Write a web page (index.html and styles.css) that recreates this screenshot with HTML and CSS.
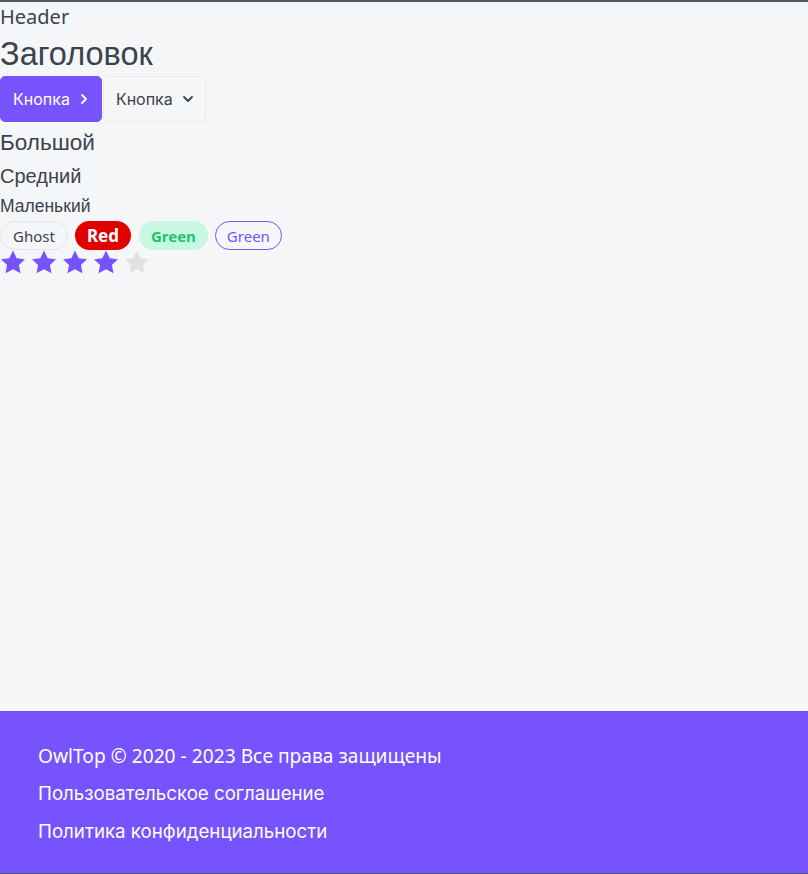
FILE: index.html
```html
<!DOCTYPE html>
<html lang="ru">
<head>
<meta charset="utf-8">
<title>OwlTop</title>
<link rel="stylesheet" href="styles.css">
</head>
<body>
<div class="page">
  <header class="header">Header</header>
  <main class="main">
    <h1 class="title">Заголовок</h1>
    <div class="buttons">
      <button class="btn btn-primary">Кнопка
        <svg class="arrow" width="10" height="12" viewBox="0 0 10 12"><path d="M3 2 L7 6 L3 10" fill="none" stroke="currentColor" stroke-width="1.8" stroke-linecap="round" stroke-linejoin="round"/></svg>
      </button>
      <button class="btn btn-ghost">Кнопка
        <svg class="arrow" width="12" height="10" viewBox="0 0 12 10"><path d="M2 3 L6 7 L10 3" fill="none" stroke="currentColor" stroke-width="1.8" stroke-linecap="round" stroke-linejoin="round"/></svg>
      </button>
    </div>
    <p class="text text-l">Большой</p>
    <p class="text text-m">Средний</p>
    <p class="text text-s">Маленький</p>
    <div class="tags">
      <span class="tag tag-ghost">Ghost</span>
      <span class="tag tag-red">Red</span>
      <span class="tag tag-green">Green</span>
      <span class="tag tag-primary">Green</span>
    </div>
    <div class="rating">
      <svg class="star filled" viewBox="0 0 24 23"><path d="M12 .5l3.4 7 7.6 1-5.5 5.3 1.4 7.6L12 17.7l-6.9 3.7 1.4-7.6L1 8.5l7.6-1z"/></svg>
      <svg class="star filled" viewBox="0 0 24 23"><path d="M12 .5l3.4 7 7.6 1-5.5 5.3 1.4 7.6L12 17.7l-6.9 3.7 1.4-7.6L1 8.5l7.6-1z"/></svg>
      <svg class="star filled" viewBox="0 0 24 23"><path d="M12 .5l3.4 7 7.6 1-5.5 5.3 1.4 7.6L12 17.7l-6.9 3.7 1.4-7.6L1 8.5l7.6-1z"/></svg>
      <svg class="star filled" viewBox="0 0 24 23"><path d="M12 .5l3.4 7 7.6 1-5.5 5.3 1.4 7.6L12 17.7l-6.9 3.7 1.4-7.6L1 8.5l7.6-1z"/></svg>
      <svg class="star" viewBox="0 0 24 23"><path d="M12 .5l3.4 7 7.6 1-5.5 5.3 1.4 7.6L12 17.7l-6.9 3.7 1.4-7.6L1 8.5l7.6-1z"/></svg>
    </div>
  </main>
  <footer class="footer">
    <div class="copy">OwlTop © 2020 - 2023 Все права защищены</div>
    <a class="flink" href="#">Пользовательское соглашение</a>
    <a class="flink" href="#">Политика конфиденциальности</a>
  </footer>
</div>
</body>
</html>
```
FILE: styles.css
```css
html, body {
  margin: 0;
  padding: 0;
}
body {
  background: #f5f6f8;
  color: #3b434e;
  font-family: "Noto Sans", sans-serif;
  border-top: 2px solid #4b5a64;
  border-bottom: 1px solid #4b5a64;
  box-sizing: border-box;
}
.page {
  min-height: 871px;
  display: grid;
  grid-template-rows: auto 1fr auto;
}
.header {
  font-size: 20px;
  line-height: 30px;
}
.main {
  display: flex;
  flex-direction: column;
  align-items: flex-start;
}
.title {
  margin: 0;
  font-family: "Liberation Sans", Arial, sans-serif;
  font-weight: 400;
  font-size: 32.5px;
  line-height: 44px;
}
.buttons {
  display: flex;
  gap: 1px;
}
.btn {
  display: flex;
  align-items: center;
  gap: 9px;
  height: 46px;
  padding: 0 12px;
  border-radius: 5px;
  font-family: "Inter", sans-serif;
  font-size: 16px;
  cursor: pointer;
}
.btn-primary {
  background: #7653fc;
  color: #fff;
  border: 1px solid #7653fc;
}
.btn-ghost {
  background: #f5f6f8;
  color: #3b434e;
  border: 1px solid #ebebeb;
  padding-right: 11px;
}
.text {
  margin: 0;
  font-family: "Liberation Sans", Arial, sans-serif;
}
.text-l { font-size: 22.5px; line-height: 32px; margin-top: 5px; }
.text-m { font-size: 20px; line-height: 31px; margin-top: 2px; }
.text-s { font-size: 17.5px; line-height: 28px; }
.tags {
  display: flex;
  gap: 7px;
  margin-top: 1px;
}
.tag {
  display: inline-flex;
  align-items: center;
  height: 29px;
  box-sizing: border-box;
  padding: 0 12px;
  border-radius: 15px;
  font-size: 15px;
}
.tag-ghost { border: 1px solid #e6e6e6; }
.tag-red { background: #e00000; color: #fff; font-weight: 700; font-size: 17px; margin-right: 1px; }
.tag-green { background: #c8f7e3; color: #1cc46f; font-weight: 700; }
.tag-primary { border: 1px solid #7653fc; color: #7653fc; padding: 0 11px; }
.rating {
  display: flex;
  gap: 5px;
}
.star {
  width: 26px;
  height: 25px;
  fill: #e2e2e2;
}
.star.filled { fill: #7653fc; }
.footer {
  background: #7653fc;
  color: #fff;
  padding: 31px 38px 27px;
  display: flex;
  flex-direction: column;
  gap: 10px;
  font-size: 18.7px;
  line-height: 28px;
}
.copy { font-family: "Noto Sans", sans-serif; font-size: 19.2px; }
.flink {
  color: #fff;
  text-decoration: none;
  font-family: "Inter", sans-serif;
}
```
